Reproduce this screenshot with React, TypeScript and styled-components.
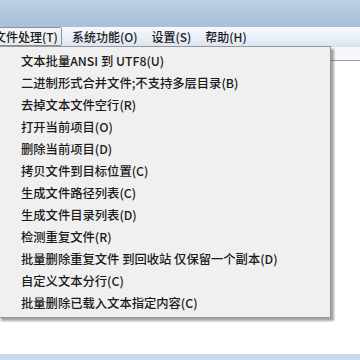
import React from "react";
import styled, { createGlobalStyle } from "styled-components";

const menus = [
  { label: "文件处理(T)", open: true },
  { label: "系统功能(O)", open: false },
  { label: "设置(S)", open: false },
  { label: "帮助(H)", open: false },
];

const fileItems = [
  "文本批量ANSI 到 UTF8(U)",
  "二进制形式合并文件;不支持多层目录(B)",
  "去掉文本文件空行(R)",
  "打开当前项目(O)",
  "删除当前项目(D)",
  "拷贝文件到目标位置(C)",
  "生成文件路径列表(C)",
  "生成文件目录列表(D)",
  "检测重复文件(R)",
  "批量删除重复文件 到回收站 仅保留一个副本(D)",
  "自定义文本分行(C)",
  "批量删除已载入文本指定内容(C)",
];

const App: React.FC = () => {
  return (
    <>
      <GlobalStyle />
      <Window>
        <TitleBar />
        <MenuBar>
          {menus.map((m) => (
            <MenuButton key={m.label} $open={m.open}>
              {m.label}
            </MenuButton>
          ))}
          <Dropdown>
            {fileItems.map((text, i) => (
              <DropItem key={i}>{text}</DropItem>
            ))}
          </Dropdown>
        </MenuBar>
        <Body>
          <ToolStrip />
          <Workspace />
          <StatusBand />
        </Body>
      </Window>
    </>
  );
};

export default App;

const GlobalStyle = createGlobalStyle`
  html, body {
    margin: 0;
    padding: 0;
    width: 360px;
    height: 360px;
    overflow: hidden;
    background: #ffffff;
  }
`;

const Window = styled.div`
  display: flex;
  flex-direction: column;
  width: 360px;
  height: 360px;
  font-family: "Noto Sans CJK SC", "Noto Sans", sans-serif;
  font-weight: 500;
  color: #1c1c1c;
`;

const TitleBar = styled.div`
  height: 27px;
  flex-shrink: 0;
  background: linear-gradient(180deg, #bdd0e4 0%, #aec4dc 60%, #a9c0da 100%);
`;

const MenuBar = styled.div`
  position: relative;
  height: 19px;
  flex-shrink: 0;
  display: flex;
  align-items: stretch;
  gap: 4px;
  margin-left: -12px;
  font-size: 12px;
  background: linear-gradient(180deg, #f7f9fd 0%, #eaf0f8 50%, #dbe5f2 100%);
  border-bottom: 1px solid #d5dfec;
`;

const MenuButton = styled.div<{ $open: boolean }>`
  display: flex;
  align-items: center;
  padding: 0 3px 0 5px;
  line-height: 17px;
  white-space: nowrap;
  border: 1px solid ${(p) => (p.$open ? "#8e8f8f" : "transparent")};
  border-radius: 2px;
  background: ${(p) =>
    p.$open ? "linear-gradient(180deg, #f4f6f9, #e6ebf1)" : "transparent"};
`;

const Dropdown = styled.div`
  position: absolute;
  top: 19px;
  left: 10px;
  width: 331px;
  padding: 3px 0;
  font-size: 12.3px;
  background: #f0f0f0;
  border: 1px solid #979797;
  box-shadow: 3px 3px 2px rgba(0, 0, 0, 0.35);
  z-index: 2;
`;

const DropItem = styled.div`
  height: 22px;
  line-height: 22px;
  padding-left: 22px;
  white-space: nowrap;
  color: #1a1a1a;
`;

const Body = styled.div`
  flex: 1;
  display: flex;
  flex-direction: column;
  background: #ffffff;
`;

const ToolStrip = styled.div`
  height: 13px;
  background: #f5f7fa;
  border-bottom: 1px solid #a3a3a3;
`;

const Workspace = styled.div`
  flex: 1;
  background: #ffffff;
`;

const StatusBand = styled.div`
  height: 6px;
  background: #c7daef;
`;
